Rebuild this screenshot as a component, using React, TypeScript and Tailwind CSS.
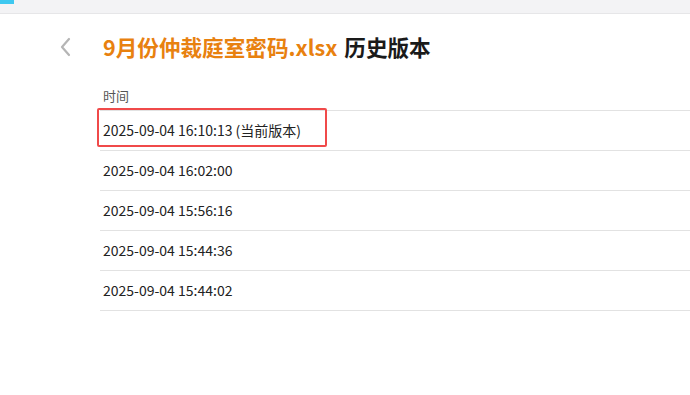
import React from "react";

const rows = [
  "2025-09-04 16:10:13 (当前版本)",
  "2025-09-04 16:02:00",
  "2025-09-04 15:56:16",
  "2025-09-04 15:44:36",
  "2025-09-04 15:44:02",
];

const App = () => {
  return (
    <div
      className="h-[395px] w-[690px] overflow-hidden bg-white"
      style={{ fontFamily: '"Noto Sans CJK SC", "Noto Sans", sans-serif' }}
    >
      {/* top strip */}
      <div className="relative h-[14px] border-b border-[#e6e6e8] bg-[#f3f3f5]">
        <div className="absolute left-0 top-0 h-[4px] w-[14px] bg-[#3ec8f0]" />
      </div>

      {/* heading */}
      <div className="flex h-[68px] items-center pb-[2px]">
        <svg width="14" height="22" viewBox="0 0 14 22" className="ml-[58px] mr-[31px]">
          <path d="M11 3 L4 11 L11 19" fill="none" stroke="#b5b5b5" strokeWidth="2.2" strokeLinecap="round" strokeLinejoin="round" />
        </svg>
        <h1 className="text-[21.6px] font-bold leading-none">
          <span className="text-[#e8810f]">9月份仲裁庭室密码.xlsx</span>
          <span className="ml-[7px] text-[#1a1a1a]">历史版本</span>
        </h1>
      </div>

      {/* table */}
      <div className="ml-[100px]">
        <div className="flex h-[28px] items-center pl-[3px] text-[13px] text-[#555]">时间</div>
        <div className="border-t border-[#e2e2e2]">
          {rows.map((r, i) => (
            <div key={r} className="relative flex h-[40px] items-center border-b border-[#e2e2e2] pl-[3px] text-[14px] text-[#222]">
              {i === 0 && (
                <div className="absolute left-[-3px] top-[-3px] h-[39px] w-[230px] rounded-[2px] border-2 border-[#f04a4a]" />
              )}
              {r}
            </div>
          ))}
        </div>
      </div>
    </div>
  );
};

export default App;
